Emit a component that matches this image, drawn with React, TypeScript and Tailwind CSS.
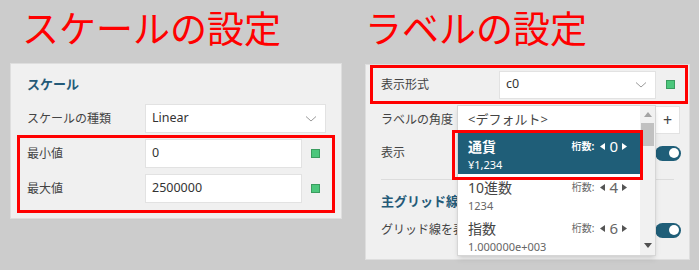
import React from 'react';

const Chevron = () => (
  <svg width="12" height="8" viewBox="0 0 12 8" className="text-[#9a9a9a]">
    <polyline points="1,1.5 6,6 11,1.5" fill="none" stroke="currentColor" strokeWidth="1" />
  </svg>
);

const GreenDot = () => <div className="w-[9px] h-[9px] bg-[#4cc77c] border border-[#3a9c5f]" />;

const Toggle = () => (
  <div className="w-[26px] h-[15px] rounded-full bg-[#1f5e78] flex items-center justify-end pr-[2px]">
    <div className="w-[10px] h-[10px] rounded-full bg-white" />
  </div>
);

const Tri = ({ dir, light }: { dir: 'l' | 'r'; light?: boolean }) => (
  <svg width="5" height="7" viewBox="0 0 5 7" className={light ? 'text-white' : 'text-[#555]'}>
    <polygon points={dir === 'l' ? '5,0 5,7 0,3.5' : '0,0 0,7 5,3.5'} fill="currentColor" />
  </svg>
);

const Digits = ({ n, light }: { n: number; light?: boolean }) => (
  <div className={`flex items-center gap-[4px] ${light ? 'text-white' : 'text-[#666]'}`}>
    <span className={`text-[10px] leading-[15px] mr-[2px] ${light ? 'font-bold' : ''}`}>桁数:</span>
    <Tri dir="l" light={light} />
    <span className="text-[15px] leading-none">{n}</span>
    <Tri dir="r" light={light} />
  </div>
);

const FormatItem = ({ name, sample, n, selected }: { name: string; sample: string; n: number; selected?: boolean }) => (
  <div className={`pl-[10px] pr-[13px] pt-[3px] ${selected ? 'bg-[#1f5e78] text-white h-[42px]' : 'text-[#444] h-[41px]'}`}>
    <div className="flex items-center justify-between h-[21px]">
      <span className={`text-[14px] leading-[21px] ${selected ? 'font-bold' : ''}`}>{name}</span>
      <Digits n={n} light={selected} />
    </div>
    <div className={`text-[11px] leading-[16px] ${selected ? 'text-white' : 'text-[#666]'}`}>{sample}</div>
  </div>
);

export default function App() {
  return (
    <div
      className="w-[699px] h-[270px] bg-[#cccccc] flex gap-[23px] pl-[10px] overflow-hidden"
      style={{ fontFamily: '"Noto Sans", "Noto Sans CJK JP", sans-serif' }}
    >
      {/* left column */}
      <div className="w-[332px] flex flex-col">
        <div
          className="h-[63px] pl-[12px] text-[37px] leading-[54px] text-[#ff0000]"
          style={{ fontFamily: '"Noto Sans CJK JP", sans-serif' }}
        >
          スケールの設定
        </div>
        <div className="h-[156px] bg-[#f0f0f0] border border-[#dedede] px-[6px] pt-[10px] text-[12px] text-[#444]">
          <div className="h-[20px] pl-[10px] leading-[20px] text-[13px] font-bold text-[#245a78]">スケール</div>
          <div className="mt-[10px] flex items-center pl-[10px]">
            <span className="w-[118px]">スケールの種類</span>
            <div className="w-[181px] h-[29px] bg-white border border-[#e2e2e2] flex items-center justify-between pl-[6px] pr-[8px] text-[12.5px] text-[#333]">
              <span>Linear</span>
              <Chevron />
            </div>
          </div>
          <div className="mt-[2px] border-[3px] border-[#ff0000] pt-[1px] pb-[7px] flex flex-col gap-[6px]">
            <div className="flex items-center pl-[7px]">
              <span className="w-[118px]">最小値</span>
              <div className="w-[157px] h-[29px] bg-white border border-[#e2e2e2] flex items-center pl-[6px] text-[12.5px] text-[#333]">0</div>
              <div className="ml-[9px]"><GreenDot /></div>
            </div>
            <div className="flex items-center pl-[7px]">
              <span className="w-[118px]">最大値</span>
              <div className="w-[157px] h-[29px] bg-white border border-[#e2e2e2] flex items-center pl-[6px] text-[12.5px] text-[#333]">2500000</div>
              <div className="ml-[9px]"><GreenDot /></div>
            </div>
          </div>
        </div>
      </div>

      {/* right column */}
      <div className="w-[325px] flex flex-col">
        <div
          className="h-[64px] text-[37px] leading-[54px] text-[#ff0000]"
          style={{ fontFamily: '"Noto Sans CJK JP", sans-serif' }}
        >
          ラベルの設定
        </div>
        <div className="relative h-[196px] bg-[#f0f0f0] border border-[#dedede] text-[12px] text-[#444]">
          <div className="ml-[4px] mr-[1px] h-[39px] border-[3px] border-[#ff0000] flex items-center pl-[8px]">
            <span className="w-[118px]">表示形式</span>
            <div className="w-[157px] h-[28px] bg-white border border-[#e2e2e2] flex items-center justify-between pl-[6px] pr-[8px] text-[12.5px] text-[#333]">
              <span>c0</span>
              <Chevron />
            </div>
            <div className="ml-[10px]"><GreenDot /></div>
          </div>
          <div className="mt-[2px] h-[28px] flex items-center pl-[15px]">
            <span className="w-[118px]">ラベルの角度</span>
            <div className="w-[181px] h-[28px] bg-white border border-[#e2e2e2] flex justify-end">
              <div className="w-[24px] border-l border-[#e2e2e2] flex items-center justify-center text-[16px] text-[#444]">+</div>
            </div>
          </div>
          <div className="mt-[4px] h-[30px] flex items-center justify-between pl-[15px] pr-[8px]">
            <span>表示</span>
            <Toggle />
          </div>
          <div className="mx-[15px] mt-[11px] border-t border-[#dcdcdc]" />
          <div className="mt-[11px] h-[20px] pl-[15px] leading-[20px] text-[13px] font-bold text-[#245a78]">主グリッド線</div>
          <div className="mt-[4px] h-[30px] flex items-center justify-between pl-[15px] pr-[8px]">
            <span>グリッド線を表示</span>
            <Toggle />
          </div>

          {/* open dropdown */}
          <div className="absolute left-[91px] top-[40px] w-[199px] h-[151px] bg-white border border-[#d6d6d6] shadow-md flex">
            <div className="flex-1 flex flex-col">
              <div className="h-[27px] pl-[10px] flex items-center text-[13px] text-[#444]">&lt;デフォルト&gt;</div>
              <FormatItem name="通貨" sample="¥1,234" n={0} selected />
              <FormatItem name="10進数" sample="1234" n={4} />
              <FormatItem name="指数" sample="1.000000e+003" n={6} />
            </div>
            <div className="w-[15px] bg-[#f1f1f1] flex flex-col items-center">
              <svg width="8" height="5" viewBox="0 0 8 5" className="mt-[6px] text-[#a3a3a3]">
                <polygon points="0,5 8,5 4,0" fill="currentColor" />
              </svg>
              <div className="mt-[6px] w-[13px] h-[23px] bg-[#c1c1c1]" />
              <div className="flex-1" />
              <svg width="8" height="5" viewBox="0 0 8 5" className="mb-[7px] text-[#505050]">
                <polygon points="0,0 8,0 4,5" fill="currentColor" />
              </svg>
            </div>
          </div>
          {/* highlight around selected item */}
          <div className="absolute left-[86px] top-[65px] w-[191px] h-[50px] border-[3px] border-[#ff0000]" />
        </div>
      </div>
    </div>
  );
}
